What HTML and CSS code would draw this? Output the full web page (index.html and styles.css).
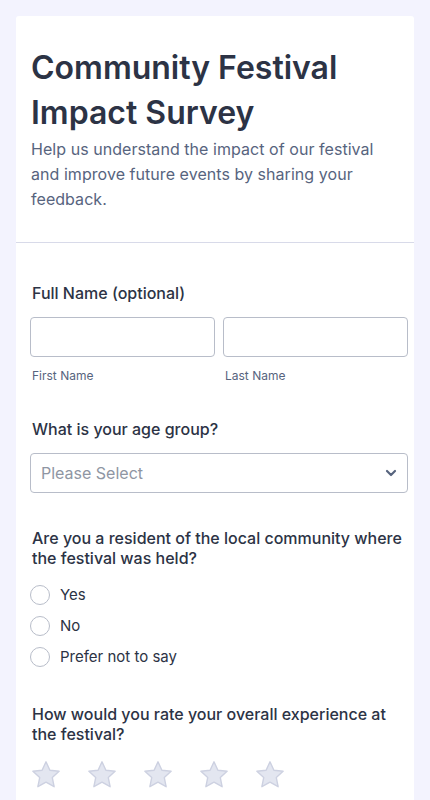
FILE: index.html
```html
<!DOCTYPE html>
<html lang="en">
<head>
<meta charset="utf-8">
<title>Community Festival Impact Survey</title>
<link rel="stylesheet" href="styles.css">
</head>
<body>
<main class="card">
  <header class="head">
    <h1 class="title">Community Festival Impact Survey</h1>
    <p class="subtitle">Help us understand the impact of our festival and improve future events by sharing your feedback.</p>
  </header>
  <section class="body">
    <div class="q q-name">
      <div class="label">Full Name (optional)</div>
      <div class="name-row">
        <div class="name-col">
          <input class="input" type="text" aria-label="First Name">
          <div class="sublabel">First Name</div>
        </div>
        <div class="name-col">
          <input class="input" type="text" aria-label="Last Name">
          <div class="sublabel">Last Name</div>
        </div>
      </div>
    </div>
    <div class="q">
      <div class="label">What is your age group?</div>
      <div class="select">
        <span class="placeholder">Please Select</span>
        <svg class="chev" width="12" height="8" viewBox="0 0 12 8"><path d="M2 2l4 4 4-4" fill="none" stroke="#57647e" stroke-width="2.2" stroke-linecap="round" stroke-linejoin="round"/></svg>
      </div>
    </div>
    <div class="q">
      <div class="label">Are you a resident of the local community where the festival was held?</div>
      <div class="radios">
        <label class="radio"><span class="circle"></span><span>Yes</span></label>
        <label class="radio"><span class="circle"></span><span>No</span></label>
        <label class="radio"><span class="circle"></span><span>Prefer not to say</span></label>
      </div>
    </div>
    <div class="q">
      <div class="label">How would you rate your overall experience at the festival?</div>
      <div class="stars">
        <svg class="star" viewBox="0 0 32 32"><path d="M16 2.8l3.9 8.4 9.2 1.1-6.8 6.3 1.8 9.1L16 23.2l-8.1 4.5 1.8-9.1-6.8-6.3 9.2-1.1z" fill="#e3e6f0" stroke="#cdd1e1" stroke-width="1.4" stroke-linejoin="round"/></svg>
        <svg class="star" viewBox="0 0 32 32"><path d="M16 2.8l3.9 8.4 9.2 1.1-6.8 6.3 1.8 9.1L16 23.2l-8.1 4.5 1.8-9.1-6.8-6.3 9.2-1.1z" fill="#e3e6f0" stroke="#cdd1e1" stroke-width="1.4" stroke-linejoin="round"/></svg>
        <svg class="star" viewBox="0 0 32 32"><path d="M16 2.8l3.9 8.4 9.2 1.1-6.8 6.3 1.8 9.1L16 23.2l-8.1 4.5 1.8-9.1-6.8-6.3 9.2-1.1z" fill="#e3e6f0" stroke="#cdd1e1" stroke-width="1.4" stroke-linejoin="round"/></svg>
        <svg class="star" viewBox="0 0 32 32"><path d="M16 2.8l3.9 8.4 9.2 1.1-6.8 6.3 1.8 9.1L16 23.2l-8.1 4.5 1.8-9.1-6.8-6.3 9.2-1.1z" fill="#e3e6f0" stroke="#cdd1e1" stroke-width="1.4" stroke-linejoin="round"/></svg>
        <svg class="star" viewBox="0 0 32 32"><path d="M16 2.8l3.9 8.4 9.2 1.1-6.8 6.3 1.8 9.1L16 23.2l-8.1 4.5 1.8-9.1-6.8-6.3 9.2-1.1z" fill="#e3e6f0" stroke="#cdd1e1" stroke-width="1.4" stroke-linejoin="round"/></svg>
      </div>
    </div>
  </section>
</main>
</body>
</html>
```
FILE: styles.css
```css
* { box-sizing: border-box; }
html, body { margin: 0; padding: 0; }
body {
  background: #f3f3fe;
  font-family: Inter, "Noto Sans", sans-serif;
  color: #2c3345;
  padding: 16px 16px 0 16px;
}
.card {
  background: #ffffff;
  border-radius: 3px 3px 0 0;
  min-height: 1000px;
}
.head {
  padding: 29px 6px 30px 15px;
  border-bottom: 1px solid #d8dae9;
}
.title {
  margin: 0;
  font-size: 32px;
  line-height: 45px;
  font-weight: 600;
  color: #2c3345;
  letter-spacing: 0;
}
.subtitle {
  margin: 2px 0 0 0;
  font-size: 16px;
  line-height: 25px;
  color: #57647e;
  padding-right: 30px;
  letter-spacing: 0.05px;
}
.body {
  padding: 40px 6px 0 14px;
  display: flex;
  flex-direction: column;
  gap: 35px;
}
.label {
  font-size: 16px;
  line-height: 20px;
  font-weight: 500;
  color: #2c3345;
  padding-left: 2px;
  margin-bottom: 14px;
}
.name-row {
  display: flex;
  gap: 8px;
}
.name-col { flex: 1; min-width: 0; }
.input {
  display: block;
  width: 100%;
  height: 40px;
  border: 1px solid #b8bdc9;
  border-radius: 4px;
  background: #fff;
  margin: 0;
}
.sublabel {
  font-size: 12px;
  line-height: 16px;
  color: #57647e;
  margin-top: 11px;
  padding-left: 2px;
}
.select {
  height: 40px;
  border: 1px solid #b8bdc9;
  border-radius: 4px;
  display: flex;
  align-items: center;
  justify-content: space-between;
  padding: 0 10px 0 10px;
}
.placeholder {
  font-size: 16px;
  color: #8f96a3;
}
.chev { display: block; }
.radios {
  display: flex;
  flex-direction: column;
  margin-top: -3px;
  margin-bottom: -3px;
}
.radio {
  display: flex;
  align-items: center;
  gap: 10px;
  height: 31px;
  font-size: 15px;
  color: #2c3345;
}
.circle {
  width: 20px;
  height: 20px;
  border: 1px solid #b8bdc9;
  border-radius: 50%;
  background: #fff;
  flex: none;
}
.stars {
  display: flex;
  gap: 24px;
  padding-left: 0;
  margin-top: 15px;
}
.star {
  width: 32px;
  height: 32px;
  display: block;
}
```
